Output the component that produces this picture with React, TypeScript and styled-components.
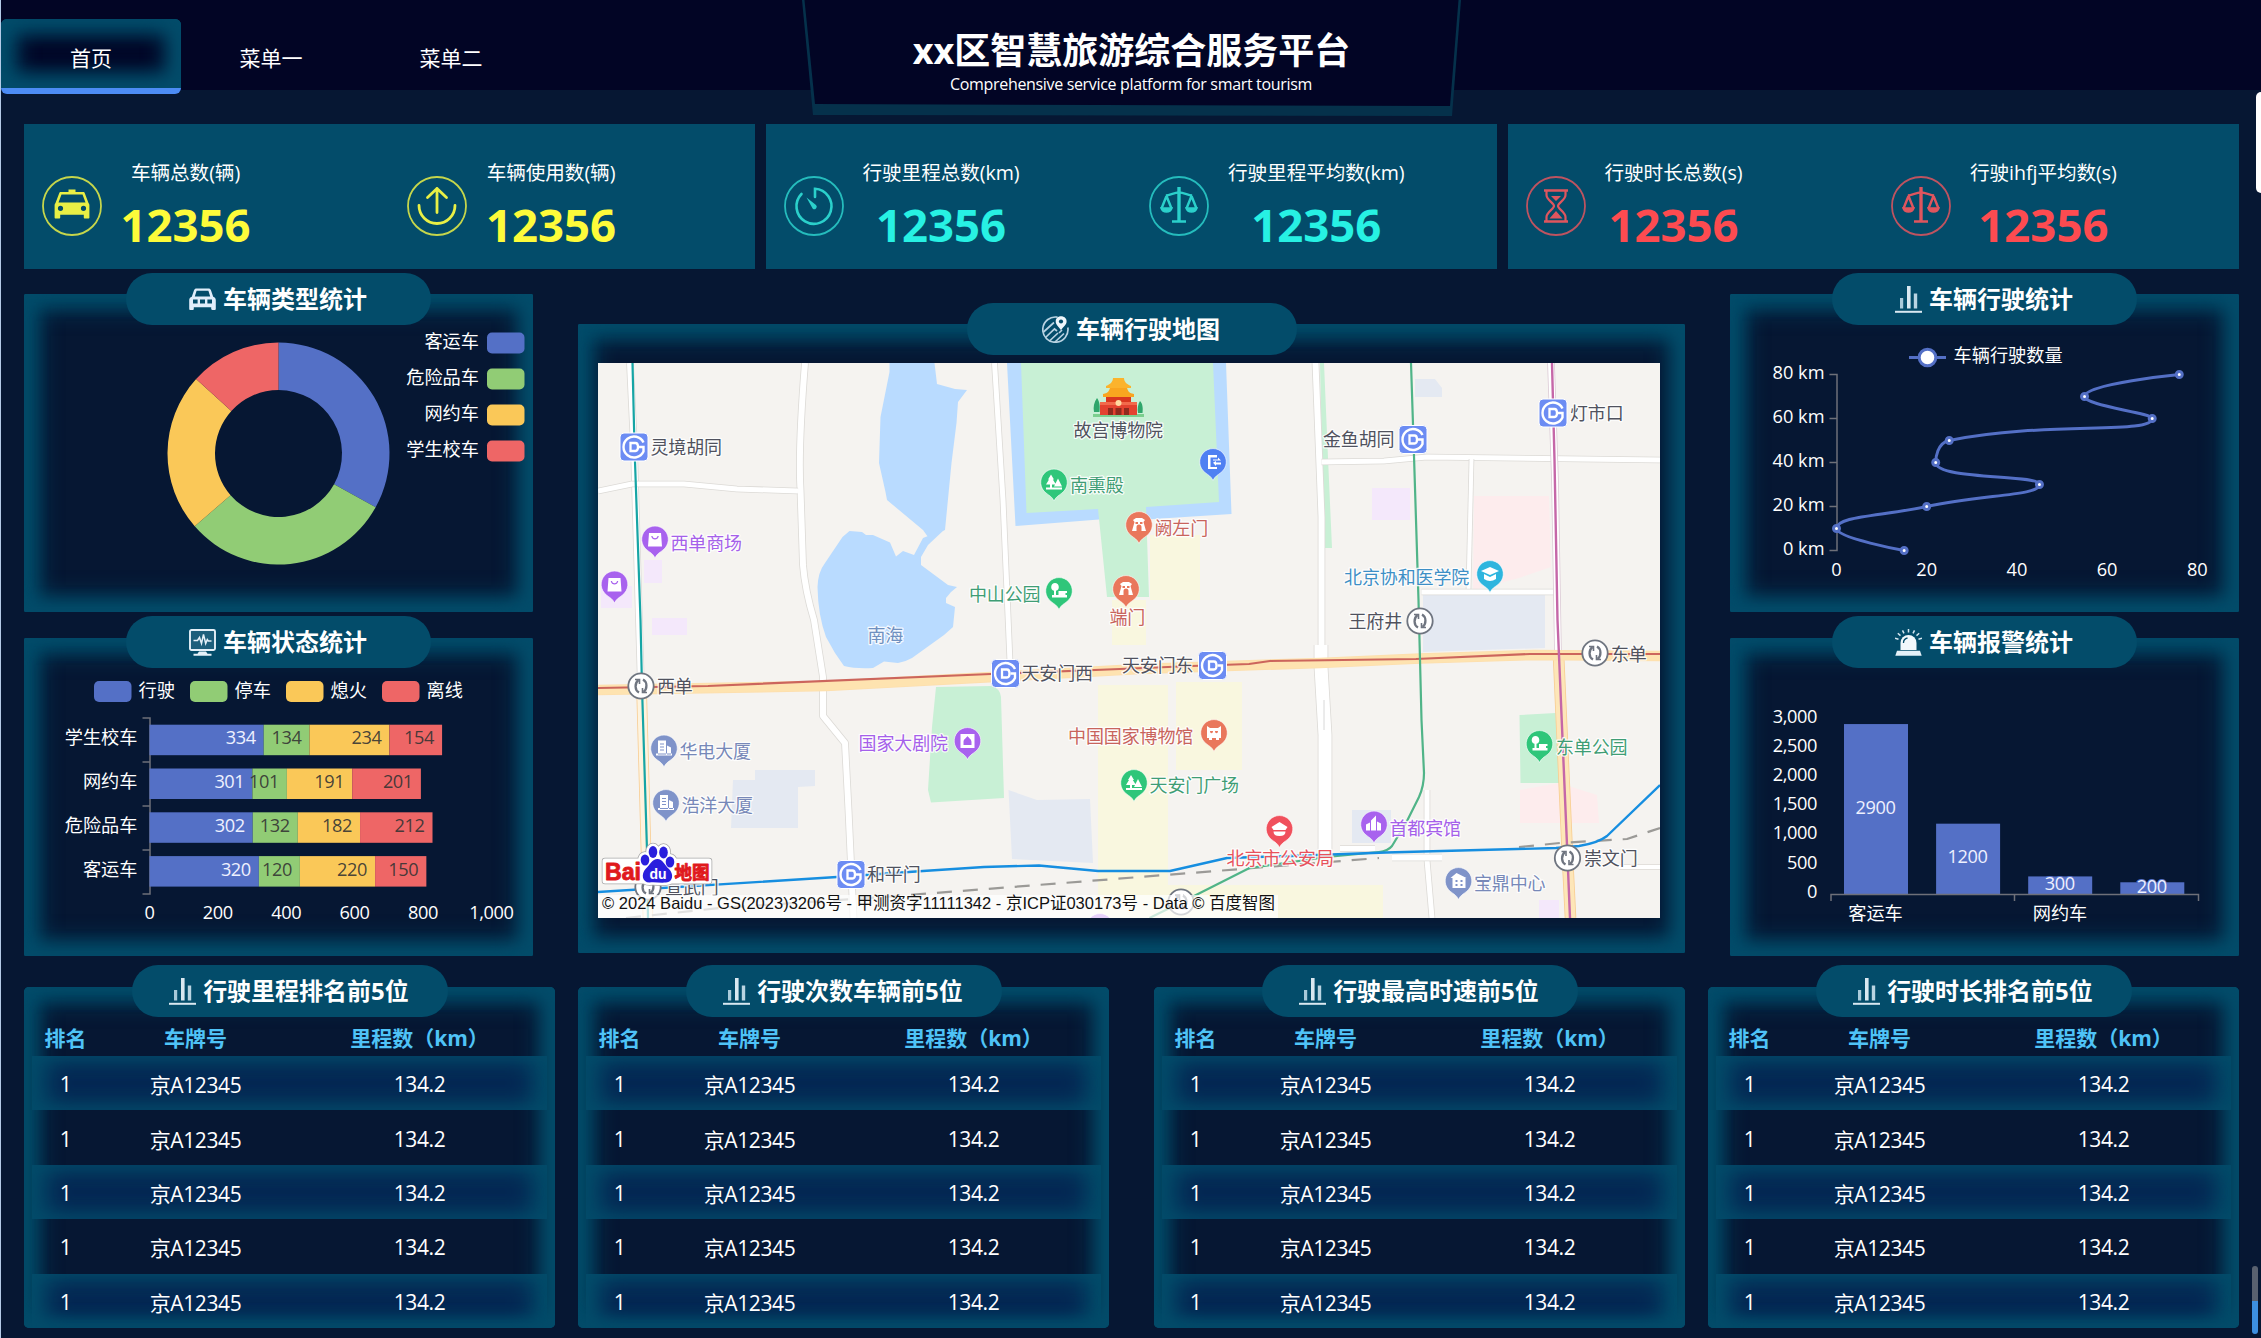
import React from "react";
import styled, { createGlobalStyle } from "styled-components";

const TEAL = "#034c6a";
const NAVY = "#061733";
const SANS = `"Open Sans", "Noto Sans", "Noto Sans CJK SC", sans-serif`;
const glow = `inset -15px 0 22px ${TEAL}, inset 0 -15px 22px ${TEAL}, inset 15px 0 22px ${TEAL}, inset 0 15px 22px ${TEAL}`;

const GlobalStyle = createGlobalStyle`
  * { box-sizing: border-box; }
  html, body { margin: 0; padding: 0; background: ${NAVY}; overflow: hidden; }
  svg { display: block; flex: none; }
  svg text { font-family: ${SANS}; }
`;

/* ---------- page frame ---------- */

const Page = styled.div`
  position: relative;
  width: 2261px;
  height: 1338px;
  overflow: hidden;
  background: ${NAVY};
  border-left: 1px solid #b4cbe8;
  color: #fff;
  font-family: ${SANS};
`;

const Header = styled.header`
  display: grid;
  grid-template-columns: 800px 660px 1fr;
  height: 90px;
  background: #020525;
`;

const Nav = styled.nav`
  display: flex;
  align-items: flex-start;
  padding-top: 19px;
`;

const Tab = styled.a<{ $active?: boolean }>`
  display: flex;
  justify-content: center;
  width: 180px;
  height: 75px;
  padding-top: 23px;
  border-radius: 6px;
  font-size: 21px;
  line-height: 32px;
  border-bottom: ${(p) => (p.$active ? "6px solid #4c8cf5" : "6px solid transparent")};
  box-shadow: ${(p) => (p.$active ? glow : "none")};
`;

const TitleBlock = styled.div`
  position: relative;
  height: 117px;
  display: flex;
  flex-direction: column;
  align-items: center;
  padding-top: 25px;
  z-index: 1;
`;

const TitleFrame = styled.svg`
  position: absolute;
  inset: 0;
`;

const Title = styled.h1`
  position: relative;
  margin: 0;
  padding-left: 1px;
  font-size: 36px;
  line-height: 52px;
  font-weight: 700;
  white-space: nowrap;
`;

const Subtitle = styled.div`
  position: relative;
  margin-top: -2px;
  font-size: 16px;
  line-height: 18px;
  letter-spacing: -0.33px;
`;

const Content = styled.main`
  display: flex;
  flex-direction: column;
  padding: 34px 22px 0 23px;
`;

/* ---------- key figures ---------- */

const StatBar = styled.section`
  display: grid;
  grid-template-columns: repeat(3, 731px);
  column-gap: 11px;
  height: 145px;
`;

const StatCard = styled.div`
  display: grid;
  grid-template-columns: 1fr 1fr;
  background: ${TEAL};
`;

const Stat = styled.div`
  display: flex;
  gap: 19px;
  padding: 34px 0 0 17.5px;
`;

const StatIconBox = styled.div`
  padding-top: 18px;
`;

const StatText = styled.div`
  display: flex;
  flex-direction: column;
  align-items: center;
`;

const StatLabel = styled.div`
  font-size: 19.6px;
  line-height: 30px;
  letter-spacing: -0.05px;
  white-space: nowrap;
`;

const StatValue = styled.div<{ $color: string }>`
  margin-top: 6px;
  font-size: 45.5px;
  line-height: 60px;
  font-weight: 700;
  color: ${(p) => p.$color};
`;

/* ---------- panels ---------- */

const MainRow = styled.section`
  display: grid;
  grid-template-columns: 509px 1107px 509px;
  column-gap: 45px;
  margin-top: 25px;
`;

const Column = styled.div`
  display: flex;
  flex-direction: column;
  gap: 26px;
`;

const Panel = styled.div<{ $height: number }>`
  display: flex;
  flex-direction: column;
  align-items: center;
  height: ${(p) => p.$height}px;
  box-shadow: ${glow};
  border-radius: 2px;
`;

const MapPanel = styled(Panel)`
  margin-top: 30px;
`;

const RankPanel = styled(Panel)`
  width: 531px;
  border-radius: 5px;
`;

const Pill = styled.h2<{ $width: number; $raise?: number }>`
  display: flex;
  align-items: center;
  justify-content: center;
  gap: 7px;
  flex: none;
  width: ${(p) => p.$width}px;
  height: 52px;
  margin: ${(p) => -21 - (p.$raise ?? 0)}px 0 ${(p) => p.$raise ?? 0}px;
  padding-right: 1px;
  border-radius: 26px;
  background: ${TEAL};
  font-size: 24px;
  line-height: 52px;
  font-weight: 700;
  white-space: nowrap;
`;

const MapFrame = styled.div`
  align-self: flex-start;
  margin: 8px 0 0 20px;
  width: 1062px;
  height: 555px;
  overflow: hidden;
`;

/* ---------- ranking tables ---------- */

const RankRow = styled.section`
  display: flex;
  gap: 45px;
  margin-top: 31px;
`;

const RankPair = styled.div`
  display: flex;
  gap: 23px;
`;

const Table = styled.div`
  display: flex;
  flex-direction: column;
  width: 515px;
  flex: 1;
`;

const Row = styled.div<{ $striped?: boolean }>`
  display: grid;
  grid-template-columns: 67px 193px 255px;
  align-items: center;
  flex: 1;
  padding-top: 2px;
  text-align: center;
  font-size: 21px;
  letter-spacing: -0.4px;
  background: ${(p) => (p.$striped ? "#052954" : "transparent")};
  box-shadow: ${(p) => (p.$striped ? `inset 15px 0 22px ${TEAL}, inset -15px 0 22px ${TEAL}` : "none")};
  &:last-child {
    box-shadow: inset 15px 0 22px ${TEAL}, inset -15px 0 22px ${TEAL}, inset 0 -8px 15px ${TEAL};
  }
`;

const HeadRow = styled(Row)`
  flex: none;
  height: 38px;
  padding: 0;
  font-weight: 700;
  letter-spacing: 0;
  color: #4fc3f7;
`;

/* ---------- window edge ---------- */

const SideHandle = styled.div`
  position: absolute;
  right: 0;
  top: 92px;
  width: 5px;
  height: 101px;
  border-radius: 6px 0 0 6px;
  background: #fff;
`;

const ScrollMark = styled.div`
  position: absolute;
  right: 3px;
  top: 1266px;
  width: 6px;
  height: 68px;
  border-radius: 4px;
  background: linear-gradient(#59616f 0 52%, #3d8fe0 52% 100%);
`;

/* ---------- icons ---------- */

const BarIcon = () => (
  <svg width="27" height="27" viewBox="0 0 27 27">
    <rect x="5" y="12" width="3.2" height="10.5" fill="#a9cada" />
    <rect x="12" y="0" width="3.6" height="22.5" fill="#d9e8f1" />
    <rect x="18.8" y="7.5" width="3.4" height="15" fill="#b9d4e2" />
    <rect x="0" y="24.8" width="27" height="2" fill="#d9e8f1" />
  </svg>
);

const CarIcon = () => (
  <svg width="27" height="27" viewBox="0 0 27 27">
    <path
      fillRule="evenodd"
      fill="#e0edfa"
      d="M7.5 2.5h12c1.2 0 2 .5 2.4 1.600l2.300 6.600c1.600.6 2.600 1.800 2.600 3.600v8.500c0 .8-.5 1.200-1.200 1.200h-2.200c-.8 0-1.200-.5-1.200-1.200v-1.500H4.800v1.500c0 .8-.5 1.200-1.200 1.200H1.400c-.7 0-1.200-.4-1.200-1.200v-8.500c0-1.800 1-3 2.600-3.600l2.300-6.600c.4-1.100 1.200-1.600 2.400-1.600ZM7.600 4.800 5.800 10.400h15.400l-1.800-5.600ZM4 13.600v3.800h4.600v-3.800Zm7 0v3.800h5v-3.800Zm7.400 0v3.800H23v-3.800Z"
    />
  </svg>
);

const MonitorIcon = () => (
  <svg width="27" height="27" viewBox="0 0 27 27" fill="none" stroke="#e4f0f8">
    <rect x="1" y="1" width="25" height="20" rx="1.5" strokeWidth="1.9" fill="#1d5f7c" />
    <path d="M4.5 11.5h4l2-3 2 6 2-9 2.2 9 1.6-4 1 1.5h3.2" strokeWidth="1.5" />
    <path d="M10 22.5h7l1.5 2.3h4v2h-18v-2h4Z" fill="#e4f0f8" stroke="none" />
  </svg>
);

const MapIcon = () => (
  <svg width="27" height="27" viewBox="0 0 27 27" fill="none" stroke="#b9d3e2" strokeWidth="1.7">
    <path d="M15.5 1.2A12.6 12.6 0 1 0 25.8 11.5" />
    <path d="M1.500 16 12 6.500M3.500 21.500l9-8.500 2.500 2M8 24.500l8-7.500M13 26l9-8.500M17 17l3-3" />
    <path d="M19 .3c3.300 0 5.600 2.200 5.600 5.200 0 3.200-3.300 5.500-5.600 8.500-2.300-3-5.300-5.300-5.300-8.500C13.700 2.500 15.900.3 19 .3Z" fill="#eef6fb" stroke="none" />
    <circle cx="19" cy="5.5" r="2.1" fill={TEAL} stroke="none" />
  </svg>
);

const SirenIcon = () => (
  <svg width="27" height="27" viewBox="0 0 27 27" fill="none" stroke="#d5e6f0" strokeWidth="1.5">
    <path d="M13.500 0v3.500M7.500 1.300l1.500 3M19.500 1.300l-1.500 3M2.800 4.300l2.700 2.300M24.200 4.300l-2.700 2.300M0 9.300l3.500 1M27 9.300l-3.500 1" />
    <path d="M5.500 21V14a8 8 0 0 1 16 0v7Z" fill="#f2f8fc" stroke="none" />
    <path d="M8.500 14a5 5 0 0 1 4-5" stroke={TEAL} strokeWidth="1.3" />
    <path d="M2 21.800h23l1.700 5H.3Z" fill="#e4f0f8" stroke="none" />
  </svg>
);

type StatKind = "taxi" | "upload" | "timer" | "scale" | "hourglass";

const statGlyphs: Record<StatKind, React.ReactNode> = {
  taxi: (
    <path
      stroke="none"
      fill="currentColor"
      fillRule="evenodd"
      d="M26.500 13.500h7V16H41c1 0 1.600.5 1.900 1.400L46.500 27c.6.6.9 1.300.9 2.200v12.300c0 .6-.4 1-1 1h-3.600c-.6 0-1-.4-1-1v-2.800H18.200v2.800c0 .6-.4 1-1 1h-3.600c-.6 0-1-.4-1-1V29.200c0-.9.300-1.600.9-2.200l3.600-9.600c.3-.9.900-1.400 1.900-1.400h7.500ZM19.500 18.500l-3 8h27l-3-8ZM18.500 29.700a2.600 2.600 0 1 0 0 5.200 2.600 2.600 0 0 0 0-5.200Zm23 0a2.600 2.600 0 1 0 0 5.200 2.600 2.600 0 0 0 0-5.200Z"
    />
  ),
  upload: <path strokeWidth="2.8" strokeLinecap="round" strokeLinejoin="round" d="M30 36.500V12.500M20.500 21.500l9.500-9 9.500 9M12 29.500a18 18 0 0 0 36 0" />,
  timer: (
    <>
      <path strokeWidth="2.6" strokeLinecap="round" d="M17.500 18A17.500 17.500 0 1 0 31 12.800V21" />
      <path fill="currentColor" stroke="none" d="M22.500 21.500 32 29a2.400 2.400 0 1 1-3.400 3.400Z" />
    </>
  ),
  scale: (
    <>
      <path strokeWidth="3.4" d="M30 11v34" />
      <path strokeWidth="2.4" d="M23 45.500h14M17 19.500c5-1 9-3 13-3s8 2 13 3M17.500 20l-5 12.500M17.500 20l5 12.500M42.500 20l-5 12.500M42.500 20l5 12.500" />
      <path strokeWidth="1.6" fill="currentColor" d="M12 32h11c-1 3-3 4-5.500 4S13 35 12 32ZM37 32h11c-1 3-3 4-5.500 4S38 35 37 32Z" />
    </>
  ),
  hourglass: (
    <>
      <path strokeWidth="2.6" d="M18 14.500h24M18 45.500h24" />
      <path strokeWidth="2.2" d="M20.500 15v4c0 5 7.500 8 7.500 11s-7.500 6-7.500 11v4M39.500 15v4c0 5-7.500 8-7.500 11s7.500 6 7.500 11v4" />
      <path fill="currentColor" stroke="none" d="M25 20h10l-5 5ZM30 35l6.500 7.500h-13Z" />
    </>
  ),
};

const StatIcon = ({ kind, color }: { kind: StatKind; color: string }) => (
  <svg width="60" height="60" viewBox="0 0 60 60" fill="none" stroke="currentColor" color={color}>
    <circle cx="30" cy="30" r="29" strokeWidth="1.8" opacity="0.85" />
    {statGlyphs[kind]}
  </svg>
);

/* ---------- charts ---------- */

const BLUE = "#5470c6";
const GREEN = "#91cc75";
const YELLOW = "#fac858";
const RED = "#ee6666";
const AXIS = "#6e7079";
const NUM = "-0.4";

const ChartSvg = ({ x, y, children }: { x: number; y: number; children: React.ReactNode }) => (
  <svg width="509" height="287" viewBox={`${x} ${y} 509 287`} fontSize="18.2" fill="#fff">
    {children}
  </svg>
);

const donutData = [
  { name: "客运车", value: 335, color: BLUE },
  { name: "危险品车", value: 310, color: GREEN },
  { name: "网约车", value: 234, color: YELLOW },
  { name: "学生校车", value: 135, color: RED },
];

const DonutChart = () => {
  const cx = 278.5;
  const cy = 453.5;
  const total = donutData.reduce((s, d) => s + d.value, 0);
  const at = (a: number, r: number) => `${cx + r * Math.sin(a)} ${cy - r * Math.cos(a)}`;
  let start = 0;
  return (
    <ChartSvg x={24} y={325}>
      {donutData.map((d) => {
        const end = start + (d.value / total) * Math.PI * 2;
        const big = end - start > Math.PI ? 1 : 0;
        const path = `M${at(start, 111)}A111 111 0 ${big} 1 ${at(end, 111)}L${at(end, 63.5)}A63.5 63.5 0 ${big} 0 ${at(start, 63.5)}Z`;
        start = end;
        return <path key={d.name} d={path} fill={d.color} />;
      })}
      {donutData.map((d, i) => (
        <g key={d.name}>
          <rect x="487" y={332.5 + i * 36} width="37.5" height="21" rx="5" fill={d.color} />
          <text x="479" y={347.5 + i * 36} textAnchor="end">
            {d.name}
          </text>
        </g>
      ))}
    </ChartSvg>
  );
};

const stackSeries = [
  { name: "行驶", color: BLUE },
  { name: "停车", color: GREEN },
  { name: "熄火", color: YELLOW },
  { name: "离线", color: RED },
];
const stackRows = [
  { name: "学生校车", values: [334, 134, 234, 154] },
  { name: "网约车", values: [301, 101, 191, 201] },
  { name: "危险品车", values: [302, 132, 182, 212] },
  { name: "客运车", values: [320, 120, 220, 150] },
];

const StackedChart = () => {
  const x0 = 149.5;
  const k = 0.3418;
  return (
    <ChartSvg x={24} y={669}>
      {stackSeries.map((s, i) => (
        <g key={s.name}>
          <rect x={94 + i * 96} y="681" width="37.5" height="21" rx="5" fill={s.color} />
          <text x={138.5 + i * 96} y="696.5">
            {s.name}
          </text>
        </g>
      ))}
      <path d="M142.500 718H150V894H142.500M142.500 762H150M142.500 806H150M142.500 850H150" fill="none" stroke={AXIS} strokeWidth="1.5" />
      {stackRows.map((row, r) => {
        const top = 724.7 + r * 43.8;
        let sum = 0;
        const cells = row.values.map((v, i) => {
          const x = x0 + sum * k;
          sum += v;
          return { v, x, end: x0 + sum * k, color: stackSeries[i].color };
        });
        return (
          <g key={row.name}>
            <text x="137.5" y={top + 19.5} textAnchor="end">
              {row.name}
            </text>
            {cells.map((c, i) => (
              <rect key={i} x={c.x} y={top} width={c.end - c.x} height="30.5" fill={c.color} />
            ))}
            {cells.map((c, i) => (
              <text key={i} x={c.end - 8} y={top + 19.5} textAnchor="end" letterSpacing={NUM} fill={i === 0 ? "#eef1ff" : "#333"} fillOpacity={i === 0 ? 1 : 0.9}>
                {c.v}
              </text>
            ))}
          </g>
        );
      })}
      {["0", "200", "400", "600", "800", "1,000"].map((t, i) => (
        <text key={t} x={x0 + i * 68.36} y="919" textAnchor="middle" letterSpacing={NUM}>
          {t}
        </text>
      ))}
    </ChartSvg>
  );
};

type Pt = [number, number];

/* Smooth curve whose control points stay inside the box of each segment. */
function smoothPath(p: Pt[]): string {
  const clamp = (v: number, a: number, b: number) => Math.max(Math.min(v, Math.max(a, b)), Math.min(a, b));
  let d = `M${p[0][0]} ${p[0][1]}`;
  let c0: Pt = p[0];
  for (let i = 1; i < p.length; i++) {
    const [x, y] = p[i];
    const prev = p[i - 1];
    let c1: Pt = [x, y];
    let nextC0: Pt = [x, y];
    if (i < p.length - 1) {
      const next = p[i + 1];
      const lp = Math.hypot(x - prev[0], y - prev[1]);
      const ln = Math.hypot(next[0] - x, next[1] - y);
      const ratio = ln / (ln + lp);
      nextC0 = [
        clamp(x + (next[0] - prev[0]) * 0.5 * ratio, next[0], x),
        clamp(y + (next[1] - prev[1]) * 0.5 * ratio, next[1], y),
      ];
      c1 = [
        clamp(x - ((nextC0[0] - x) * lp) / ln, prev[0], x),
        clamp(y - ((nextC0[1] - y) * lp) / ln, prev[1], y),
      ];
      nextC0 = [x + ((x - c1[0]) * ln) / lp, y + ((y - c1[1]) * ln) / lp];
    }
    d += `C${c0[0]} ${c0[1]} ${c1[0]} ${c1[1]} ${x} ${y}`;
    c0 = nextC0;
  }
  return d;
}

const lineData: Pt[] = [[15, 0], [0, 10], [20, 20], [45, 30], [22, 40], [25, 50], [70, 60], [55, 70], [76, 80]];

const LineChart = () => {
  const pts = lineData.map(([a, b]): Pt => [1836.5 + a * 4.51, 550.5 - b * 2.2]);
  return (
    <ChartSvg x={1730} y={325}>
      <path d="M1909 357.500H1946" stroke={BLUE} strokeWidth="3" />
      <circle cx="1927.5" cy="357.5" r="8.3" stroke={BLUE} strokeWidth="3" />
      <text x="1953.5" y="362">车辆行驶数量</text>
      <path d="M1829.500 374.500H1837V550.500H1829.500M1829.500 418.500H1837M1829.500 462.500H1837M1829.500 506.500H1837" fill="none" stroke={AXIS} strokeWidth="1.5" />
      {[80, 60, 40, 20, 0].map((v, i) => (
        <text key={v} x="1824.5" y={378.5 + i * 44} textAnchor="end">
          {v} km
        </text>
      ))}
      {[0, 20, 40, 60, 80].map((v, i) => (
        <text key={v} x={1836.5 + i * 90.2} y="575.5" textAnchor="middle">
          {v}
        </text>
      ))}
      <path d={smoothPath(pts)} fill="none" stroke={BLUE} strokeWidth="3" />
      {pts.map(([x, y]) => (
        <circle key={y} cx={x} cy={y} r="3" stroke={BLUE} strokeWidth="3" />
      ))}
    </ChartSvg>
  );
};

const BarChart = () => (
  <ChartSvg x={1730} y={669}>
    {["3,000", "2,500", "2,000", "1,500", "1,000", "500", "0"].map((t, i) => (
      <text key={t} x="1817" y={722.5 + i * 29.2} textAnchor="end" letterSpacing={NUM}>
        {t}
      </text>
    ))}
    {[2900, 1200, 300, 200].map((v, i) => {
      const h = v * 0.0586;
      return (
        <g key={v}>
          <rect x={1844 + i * 92.1} y={894 - h} width="64" height={h} fill={BLUE} />
          <text x={1875.5 + i * 92.1} y={898.5 - h / 2} textAnchor="middle" letterSpacing={NUM} fill="#eef1ff" stroke={BLUE} strokeWidth={v < 500 ? 2 : 0} paintOrder="stroke">
            {v}
          </text>
        </g>
      );
    })}
    <path d="M1831 901V894.500H2198.500V901M2014.500 894V901" fill="none" stroke={AXIS} strokeWidth="1.5" />
    <text x="1875.5" y="919.5" textAnchor="middle">客运车</text>
    <text x="2060" y="919.5" textAnchor="middle">网约车</text>
  </ChartSvg>
);

/* ---------- city map ---------- */

const Road = ({ d, w = 7, color = "#fff", edge = "#dcdad6" }: { d: string; w?: number; color?: string; edge?: string }) => (
  <g fill="none" strokeLinejoin="round">
    <path d={d} stroke={edge} strokeWidth={w + 1.6} />
    <path d={d} stroke={color} strokeWidth={w} />
  </g>
);

const Metro = ({ x, y }: { x: number; y: number }) => (
  <g transform={`translate(${x} ${y})`} fill="none" stroke="#fff">
    <rect x="-14" y="-14" width="28" height="28" rx="4" fill="#6c8cf3" strokeWidth="1" />
    <path d="M9.500 -4.500A10.500 10.500 0 1 0 9.500 4.500V0H5" strokeWidth="2.4" />
    <path d="M-3.500 -4H1.500Q4 -4 4 0T1.500 4H-3.500Z" strokeWidth="2.3" />
  </g>
);

const Transfer = ({ x, y }: { x: number; y: number }) => (
  <g transform={`translate(${x} ${y})`} fill="none" stroke="#6f7580">
    <circle r="12.7" fill="#fff" strokeWidth="1.8" />
    <path d="M-2 6.500C-6.500 4-6.500-3-2.500-6M2 -6.500C6.500-4 6.500 3 2.500 6" strokeWidth="2.3" />
    <path d="M-6 -6.500h4.500v4.500M6 6.500H1.500V2" strokeWidth="1.6" />
  </g>
);

const pinGlyphs: Record<string, React.ReactNode> = {
  bag: <path fillRule="evenodd" d="M-6 -6.500H6L7 7H-7ZM-3.800 -3.500C-3 1.300 3 1.300 3.800 -3.500H2.500C2 -.5-2-.5-2.500-3.500Z" />,
  tree: <path d="M-3 -8 0-3H-1.200L2 2H-2V5H8V7H-8V5H-4V2H-8L-5-3H-6ZM4-4 8 4H0Z" />,
  park: <path d="M-4 -8a4 4 0 0 1 1 7.800V4H-.5V0H8V2H6.500V4H8V6.500H-7V4H-5V-.2A4 4 0 0 1-4-8Z" />,
  gate: <path fillRule="evenodd" d="M-6 -5-3-7H3L6-5 4.500-3 7 6H2.500V2a2.500 2.500 0 0 0-5 0V6H-7L-4.500-3ZM-3.500-3V-1H-1V-3ZM1-3V-1H3.500V-3Z" />,
  museum: <path fillRule="evenodd" d="M-7 -7-4-5H4L7-7V5H5V7H2V5H-2V7H-5V5H-7ZM-4-2C-4 1-1 1-1-2ZM1-2C1 1 4 1 4-2Z" />,
  door: <path d="M-5 -7H4V-4.500H-2.500V5H4V7H-5ZM0 -2.500H5V-4.500L8-1.500H0ZM8 2.500H2V.5H8ZM0 .8 3-1V4Z" />,
  cap: <path d="M0 -7 9-3 0 1-9-3ZM-6 0 0 3 6 0V5Q0 9-6 5Z" />,
  house: <path fillRule="evenodd" d="M-7 -7H7V7H-7ZM0 -5C1-3 4-2 4 1V4H-4V1C-4-2-1-3 0-5Z" />,
  tower: <path fillRule="evenodd" d="M-6 -8H2V6H-6ZM3 -3 7-1V6H3ZM-4-5V-4H0V-5ZM-4-2V-1H0V-2ZM-4 1V2H0V1ZM-8 5H8V7H-8Z" />,
  hotel: <path d="M-8 0-4-2V6H-8ZM-3 -4 2-9V6H-3ZM3-3 7-1V6H3Z" />,
  hall: <path fillRule="evenodd" d="M-8 -3-2-8 8-3H7V7H-6V-3ZM-3-1V1H-1V-1ZM2-1V1H4V-1ZM-3 3V5H-1V3ZM2 3V5H4V3Z" />,
  police: <path d="M0 -7 8-2 6 1H-6L-8-2ZM-6 2.500H6Q6 7 0 7T-6 2.500Z" />,
};

const Pin = ({ x, y, color, kind }: { x: number; y: number; color: string; kind: string }) => (
  <g transform={`translate(${x} ${y})`}>
    <path d="M0 18.500C-2 14-5 13-8 10.500A13.300 13.300 0 1 1 8 10.500C5 13 2 14 0 18.500Z" fill={color} stroke="#fff" strokeOpacity="0.6" />
    <g fill="#fff">{pinGlyphs[kind]}</g>
  </g>
);

type Place = { t: string; x: number; y: number; c: string };
const DARK = "#50525e";
const PURPLE = "#a560ea";
const LEAF = "#3f9d75";
const BRICK = "#c8645c";
const SLATE = "#7788b8";

const places: Place[] = [
  { t: "灵境胡同", x: 650.5, y: 447, c: DARK },
  { t: "灯市口", x: 1570, y: 413.5, c: DARK },
  { t: "金鱼胡同", x: 1323, y: 439.5, c: DARK },
  { t: "天安门西", x: 1021.5, y: 673.5, c: DARK },
  { t: "天安门东", x: 1122, y: 665.5, c: DARK },
  { t: "和平门", x: 867, y: 874.5, c: DARK },
  { t: "西单", x: 657, y: 686, c: DARK },
  { t: "王府井", x: 1348.5, y: 621, c: DARK },
  { t: "东单", x: 1611, y: 654, c: DARK },
  { t: "崇文门", x: 1584, y: 858.5, c: DARK },
  { t: "宣武门", x: 665, y: 887, c: DARK },
  { t: "故宫博物院", x: 1073.5, y: 430.5, c: DARK },
  { t: "西单商场", x: 670.5, y: 543, c: PURPLE },
  { t: "国家大剧院", x: 858.5, y: 743.5, c: PURPLE },
  { t: "首都宾馆", x: 1389.5, y: 828, c: PURPLE },
  { t: "南熏殿", x: 1070, y: 485.5, c: LEAF },
  { t: "中山公园", x: 969, y: 594.5, c: LEAF },
  { t: "天安门广场", x: 1149.5, y: 785.5, c: LEAF },
  { t: "东单公园", x: 1556, y: 747, c: LEAF },
  { t: "阙左门", x: 1154.5, y: 528.5, c: BRICK },
  { t: "端门", x: 1109.5, y: 617.5, c: BRICK },
  { t: "中国国家博物馆", x: 1068, y: 736.5, c: BRICK },
  { t: "北京协和医学院", x: 1344, y: 577.5, c: "#3d8fc6" },
  { t: "北京市公安局", x: 1226.5, y: 858, c: "#e8525c" },
  { t: "宝鼎中心", x: 1474, y: 883.5, c: SLATE },
  { t: "华电大厦", x: 679.5, y: 751, c: SLATE },
  { t: "浩洋大厦", x: 681.5, y: 805, c: SLATE },
  { t: "南海", x: 867.5, y: 635.5, c: "#6f90c0" },
];

const Palace = () => (
  <g transform="translate(1118 398)">
    <rect x="-25" y="16" width="51" height="3" fill="#7bcf8e" />
    <path d="M-21 0C-18 4-18 9-18.500 14H-24C-25 9-24 4-21 0ZM22 3C25 6 25 11 24.500 15H20C19 11 20 6 22 3Z" fill="#2fa66b" />
    <path d="M-18 4H19V17H-18Z" fill="#e3422f" />
    <path d="M-18 4H19V7H-18Z" fill="#f26a4b" />
    <path d="M-10 17V10H-5V17ZM-2.500 17V10H3.500V17ZM6 17V10H11V17Z" fill="#8f2a1d" />
    <path d="M-12 -4H13V4H-12Z" fill="#d9361f" />
    <path d="M-15 -4C-9-5-9-8-8-10H9C10-8 10-5 16-4V-1H-15Z" fill="#f9a51f" />
    <path d="M-7 -14H8V-10H-7Z" fill="#d9361f" />
    <path d="M-12 -12C-7-14-5-17-5-20H6C6-17 8-14 13-12V-10H-12Z" fill="#fbb32c" />
    <circle cx=".5" cy="5" r="3" fill="#ffd9a0" />
  </g>
);

const PAW = "M657.500 859C662.500 859 664.500 865 669 869C674 874 673 882 666 882.500C660.500 883 655 882 649.500 882.500C642 882.500 641 874 645.500 869C650.500 864.500 652 859 657.500 859Z";

const PawToes = () => (
  <>
    <ellipse cx="645" cy="860" rx="4.3" ry="5.6" />
    <ellipse cx="653" cy="852" rx="4.3" ry="6" />
    <ellipse cx="663.5" cy="852.5" rx="4.3" ry="6" />
    <ellipse cx="670" cy="862" rx="4.3" ry="5.6" />
  </>
);

const LogoWord = styled.text`
  && {
    font-family: "Liberation Sans", "Noto Sans CJK SC", sans-serif;
  }
`;

const MapLogo = () => (
  <g fontWeight="700" strokeLinejoin="round">
    <g fill="#fff" stroke="#a9a9a9" strokeWidth="6.5">
      <rect x="605" y="861" width="104" height="20" />
      <path d={PAW} />
      <PawToes />
    </g>
    <g fill="#fff" stroke="#fff" strokeWidth="5">
      <rect x="605" y="861" width="104" height="20" />
      <path d={PAW} />
      <PawToes />
    </g>
    <g fill="#e0191c" stroke="#e0191c" strokeWidth="0.9">
      <LogoWord x="605" y="880" fontSize="24" textLength="36" lengthAdjust="spacingAndGlyphs">Bai</LogoWord>
      <LogoWord x="674.5" y="878.5" fontSize="18" textLength="35" lengthAdjust="spacingAndGlyphs">地图</LogoWord>
    </g>
    <g fill="#2a1fdd">
      <PawToes />
      <path d={PAW} />
    </g>
    <LogoWord x="649.5" y="878.5" fontSize="14" fill="#fff">du</LogoWord>
  </g>
);

const MapCredit = styled.text`
  && {
    font-family: "Liberation Sans", "Noto Sans CJK SC", sans-serif;
  }
  font-size: 16.5px;
  fill: #111;
`;

const CityMap = () => (
  <svg width="1062" height="555" viewBox="598 363 1062 555">
    <rect x="598" y="363" width="1062" height="555" fill="#f5f3f0" />
    <g fill="#e4e9f2">
      <path d="M1415 379H1435L1442 388V397H1415ZM1423 595H1545V648L1423 652ZM755 770H815V786L798 787V828H731L733 780H755Z" />
      <path d="M1008.500 790 1037 800 1090 799 1093 863 1012 859ZM1352 810H1391V843H1352Z" />
    </g>
    <g fill="#f4e8fb">
      <path d="M1372 488H1410V520H1372ZM644 560H662V583H644ZM601 586H632V608H601ZM652 618H687V635H652ZM1539 900H1559V918H1539Z" />
    </g>
    <path fill="#fdeced" d="M1474 496H1549L1551 567 1519 578 1473 590ZM1520 790 1559 783 1597 795 1599 823H1520Z" />
    <path fill="#f9f7df" d="M1150 535H1200V600H1150ZM1112 600H1146V645H1112ZM1098 685H1168V885H1383V918H1098ZM1176 682H1242V770H1176Z" />
    <g fill="#b9dbff">
      <path d="M889.500 363H934.500L937 384 955 389 967 390 958 402 956.500 423 951.500 463 945 530 928 537 923 530 887 500 885.500 492 879 463 880.500 417 889.500 372Z" />
      <path d="M849.500 531 862 532 866 535H873L890 542.500 896 556.500 903 551 914 555 923 538 928 536 945 529 928 545 921 557V565L948 585 957 587 951 592 946 598V603L955 607 953 627 944 635 912 658Q905 662 898 663L884 661.500 873 668Q856 669 844 666L835 653 826 637Q818 615 817.500 587 818 572 825 563L842.500 537Z" />
      <path d="M1007 363H1226L1231.500 514 1146 519.500H1099L1015.500 526Z" />
    </g>
    <g fill="#c8f0d5">
      <path d="M1021 363H1213L1219 502 1146 507 1149 597H1107L1098 509 1026.500 513Z" />
      <path d="M936 687 991 686Q1000 688 1001 697L1004 798 931 802.500 928 790 932 727Z" />
      <path d="M1320 363H1324L1328 458 1332 548H1325L1322 458ZM1519.500 715 1555.500 713 1559.500 783H1520.500Z" />
    </g>
    <Road d="M630 363 634 447 639 620 641 687" w={6} />
    <Road d="M805 363Q798 450 800.500 490L803 565Q805 590 814 620L823 677V716L845 743 848.500 810 853.500 918" w={6} />
    <Road d="M598 491 632 484H684L737 489 798 491" w={5} />
    <Road d="M994.500 363 1003 500 1010 662" w={5} />
    <Road d="M1315.500 363 1321.500 517V645" w={6} />
    <Road d="M1321 645V667L1325 735V850" w={13} />
    <path d="M1324 700V730" stroke="#d8d8d8" />
    <Road d="M1321.500 462 1384 461 1427 457 1660 460" w={5} />
    <Road d="M1471.500 459 1468.500 590" w={4} />
    <Road d="M1421.500 592H1555" w={5} />
    <Road d="M1427 790V860L1432 918" w={5} />
    <Road d="M1392 857.500H1442" w={6} />
    <Road d="M1340 848.500H1375" w={5} />
    <Road d="M1619 867H1660" w={4} />
    <Road d="M1551 363 1555 480 1558 655" w={6} edge="#dccbd6" />
    <Road d="M641.500 687 646 850 648 918" w={9} color="#fdf3df" edge="#f8cd92" />
    <Road d="M1558.500 655 1567.500 857 1570.500 918" w={10} color="#fde6b8" edge="#f8cd92" />
    <Road d="M598 690 826 686 1140 669 1227 666 1320 663 1420 658.500 1534 655 1660 656" w={9} color="#fee3b0" edge="#fddfae" />
    <g fill="none" strokeLinejoin="round">
      <g strokeDasharray="15 11" stroke="#9b9a97" strokeWidth="2.2">
        <path d="M626 918 720 908 884 897 1140 877 1379 858" />
        <path d="M1519 847 1560 843 1627 839 1660 828" />
      </g>
      <path d="M632.500 363 634.500 447 640.500 620 642 687 647 850 648 918" stroke="#16a5a5" strokeWidth="2.2" />
      <path d="M598 688 708 686 991 674 1120 669 1192 666 1249 664 1270 661 1416 659 1530 654H1660" stroke="#cc655c" strokeWidth="2.2" />
      <path d="M1411 363 1413.500 440 1418.500 600 1421.500 720 1424 773Q1424 786 1419 797L1406.500 822 1392 846Q1388 851 1379 852L1327 857 1249.500 868 1196 895 1149.500 918" stroke="#50b488" strokeWidth="2.2" />
      <path d="M1552 363 1554.500 460 1557.500 620 1567.500 857 1570 918" stroke="#c567a8" strokeWidth="2.4" />
      <path d="M598 892 837 877 923 871 984 867 1039 865.500 1098 871H1170L1227 858 1290 856 1386 852.500 1556 848 1579 846Q1598 843 1607 836L1660 785" stroke="#168ee0" strokeWidth="2.4" />
    </g>
    <Palace />
    <g fontSize="18" stroke="#fff" strokeOpacity="0.85" strokeWidth="2.5" strokeLinejoin="round" paintOrder="stroke">
      {places.map((p) => (
        <text key={p.t} x={p.x} y={p.y + 6.5} fill={p.c} textLength={p.t.length * 17.9}>
          {p.t}
        </text>
      ))}
    </g>
    <Metro x={634} y={447} />
    <Metro x={1553} y={413} />
    <Metro x={1413} y={439.5} />
    <Metro x={1005.5} y={673.5} />
    <Metro x={1212.5} y={665.5} />
    <Metro x={851} y={874.5} />
    <Transfer x={641} y={686} />
    <Transfer x={1420} y={621} />
    <Transfer x={1595} y={653} />
    <Transfer x={1567.5} y={858} />
    <Transfer x={648} y={887} />
    <Transfer x={1181} y={902} />
    <Pin x={655} y={539.5} color="#a862ee" kind="bag" />
    <Pin x={614.5} y={584.5} color="#a862ee" kind="bag" />
    <Pin x={1054} y={482.5} color="#2fc67a" kind="tree" />
    <Pin x={1059} y={591} color="#2fc67a" kind="park" />
    <Pin x={1134} y={783} color="#2fc67a" kind="tree" />
    <Pin x={1539.5} y={744} color="#2fc67a" kind="park" />
    <Pin x={1139} y={525} color="#e9775c" kind="gate" />
    <Pin x={1126} y={589} color="#e9775c" kind="gate" />
    <Pin x={1214} y={733} color="#e9775c" kind="museum" />
    <Pin x={1213} y={462} color="#4f80f2" kind="door" />
    <Pin x={1490} y={574} color="#2eb5de" kind="cap" />
    <Pin x={967.5} y={741} color="#a862ee" kind="house" />
    <Pin x={1279.5} y={829} color="#f0505c" kind="police" />
    <Pin x={1374} y={824.5} color="#a862ee" kind="hotel" />
    <Pin x={1458.5} y={881} color="#7f93c9" kind="hall" />
    <Pin x={664} y={748.5} color="#7f93c9" kind="tower" />
    <Pin x={666} y={803} color="#7f93c9" kind="tower" />
    <Pin x={1100} y={927} color="#a862ee" kind="bag" />
    <rect x="598" y="895" width="680" height="23" fill="#fff" fillOpacity="0.7" />
    <MapLogo />
    <MapCredit x="602" y="909" textLength="673">
      © 2024 Baidu - GS(2023)3206号 - 甲测资字11111342 - 京ICP证030173号 - Data © 百度智图
    </MapCredit>
  </svg>
);

/* ---------- assembled page ---------- */

const SUN = "#fdfb3a";
const AQUA = "#27f1e3";
const CORAL = "#fd4b50";

const statCards: { color: string; items: { kind: StatKind; label: string }[] }[] = [
  { color: SUN, items: [{ kind: "taxi", label: "车辆总数(辆)" }, { kind: "upload", label: "车辆使用数(辆)" }] },
  { color: AQUA, items: [{ kind: "timer", label: "行驶里程总数(km)" }, { kind: "scale", label: "行驶里程平均数(km)" }] },
  { color: CORAL, items: [{ kind: "hourglass", label: "行驶时长总数(s)" }, { kind: "scale", label: "行驶ihfj平均数(s)" }] },
];

const iconTint: Record<string, string> = { [SUN]: "#e9ef45", [AQUA]: "#2bd0cb", [CORAL]: "#e0555e" };

const RankTable = ({ title }: { title: string }) => (
  <RankPanel $height={341}>
    <Pill $width={316} $raise={1}>
      <BarIcon />
      {title}
    </Pill>
    <Table>
      <HeadRow>
        <span>排名</span>
        <span>车牌号</span>
        <span>里程数（km）</span>
      </HeadRow>
      {[0, 1, 2, 3, 4].map((i) => (
        <Row key={i} $striped={i % 2 === 0}>
          <span>1</span>
          <span>京A12345</span>
          <span>134.2</span>
        </Row>
      ))}
    </Table>
  </RankPanel>
);

export default function App() {
  return (
    <Page>
      <GlobalStyle />
      <Header>
        <Nav>
          <Tab $active>首页</Tab>
          <Tab>菜单一</Tab>
          <Tab>菜单二</Tab>
        </Nav>
        <TitleBlock>
          <TitleFrame width="660" height="117" viewBox="0 0 660 117">
            <path d="M1 0H660L651 116 12 115Z" fill="#05314b" />
            <path d="M3.500 0H657.500L649 106 14 104Z" fill="#020525" />
          </TitleFrame>
          <Title>xx区智慧旅游综合服务平台</Title>
          <Subtitle>Comprehensive service platform for smart tourism</Subtitle>
        </TitleBlock>
      </Header>
      <Content>
        <StatBar>
          {statCards.map((card) => (
            <StatCard key={card.color}>
              {card.items.map((item) => (
                <Stat key={item.label}>
                  <StatIconBox>
                    <StatIcon kind={item.kind} color={iconTint[card.color]} />
                  </StatIconBox>
                  <StatText>
                    <StatLabel>{item.label}</StatLabel>
                    <StatValue $color={card.color}>12356</StatValue>
                  </StatText>
                </Stat>
              ))}
            </StatCard>
          ))}
        </StatBar>
        <MainRow>
          <Column>
            <Panel $height={318}>
              <Pill $width={305}>
                <CarIcon />
                车辆类型统计
              </Pill>
              <DonutChart />
            </Panel>
            <Panel $height={318}>
              <Pill $width={305} $raise={1}>
                <MonitorIcon />
                车辆状态统计
              </Pill>
              <StackedChart />
            </Panel>
          </Column>
          <MapPanel $height={629}>
            <Pill $width={330}>
              <MapIcon />
              车辆行驶地图
            </Pill>
            <MapFrame>
              <CityMap />
            </MapFrame>
          </MapPanel>
          <Column>
            <Panel $height={318}>
              <Pill $width={305}>
                <BarIcon />
                车辆行驶统计
              </Pill>
              <LineChart />
            </Panel>
            <Panel $height={318}>
              <Pill $width={305} $raise={1}>
                <SirenIcon />
                车辆报警统计
              </Pill>
              <BarChart />
            </Panel>
          </Column>
        </MainRow>
        <RankRow>
          <RankPair>
            <RankTable title="行驶里程排名前5位" />
            <RankTable title="行驶次数车辆前5位" />
          </RankPair>
          <RankPair>
            <RankTable title="行驶最高时速前5位" />
            <RankTable title="行驶时长排名前5位" />
          </RankPair>
        </RankRow>
      </Content>
      <SideHandle />
      <ScrollMark />
    </Page>
  );
}
